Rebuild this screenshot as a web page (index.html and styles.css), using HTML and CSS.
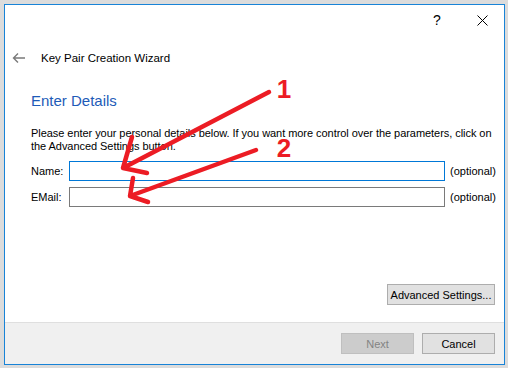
FILE: index.html
```html
<!DOCTYPE html>
<html lang="en">

<head>
    <meta charset="UTF-8">
    <title>Key Pair Creation Wizard</title>
    <link rel="stylesheet" href="styles.css">
</head>

<body>
    <div class="window">
        <div class="titlebar">
            <span class="tb-btn help">?</span>
            <span class="tb-btn close">
                <svg width="11" height="11" viewBox="0 0 11 11">
                    <path d="M0.5 0.5 L10.5 10.5 M10.5 0.5 L0.5 10.5" stroke="#000" stroke-width="1" fill="none" />
                </svg>
            </span>
        </div>
        <div class="header">
            <svg class="back" width="14" height="12" viewBox="0 0 14 12">
                <path d="M13 6 H1.5 M6 1.5 L1.5 6 L6 10.5" stroke="#7a7a7a" stroke-width="1.4" fill="none" />
            </svg>
            <span class="wizard-title">Key Pair Creation Wizard</span>
        </div>
        <div class="content">
            <h1>Enter Details</h1>
            <p>Please enter your personal details below. If you want more control over the parameters, click on
                the Advanced Settings button.</p>
            <div class="form">
                <label for="name">Name:</label>
                <input id="name" class="field focused" type="text">
                <span class="optional">(optional)</span>
                <label for="email">EMail:</label>
                <input id="email" class="field" type="text">
                <span class="optional">(optional)</span>
            </div>
            <div class="adv-row">
                <button class="btn adv">Advanced Settings...</button>
            </div>
        </div>
        <div class="footer">
            <button class="btn" disabled>Next</button>
            <button class="btn">Cancel</button>
        </div>
    </div>

    <!-- red marks drawn over the screenshot -->
    <svg class="marks" width="508" height="368" viewBox="0 0 508 368">
        <g stroke="#ec1c24" stroke-width="4.5" stroke-linecap="round" stroke-linejoin="round" fill="none">
            <path d="M269 92 L123 168 M132 137 L123 168 L147 173" />
            <path d="M256 150 L130 196 M133 178 L130 196 L148 202" />
        </g>
        <text x="284" y="98" class="num">1</text>
        <text x="284" y="157" class="num">2</text>
    </svg>
</body>

</html>
```

FILE: styles.css
```css
/* Reset */
body {
    margin: 0;
    padding: 0;
    width: 508px;
    height: 368px;
    overflow: hidden;
    position: relative;
    background-color: #dcdcdc;
    font-family: 'Liberation Sans', Arial, sans-serif;
    font-size: 11px;
    color: #000;
}

/* Dialog frame */
.window {
    margin: 4px 0 0 4px;
    width: 501px;
    height: 361px;
    box-sizing: border-box;
    border: 1px solid #1883d7;
    background-color: #fff;
    display: flex;
    flex-direction: column;
}

.titlebar {
    height: 30px;
    display: flex;
    justify-content: flex-end;
}

.tb-btn {
    display: flex;
    align-items: center;
    justify-content: center;
    height: 30px;
}

.help {
    width: 46px;
    font-size: 14px;
}

.close {
    width: 44px;
}

.header {
    height: 45px;
    display: flex;
    align-items: center;
    padding-left: 7px;
}

.back {
    margin-right: 15px;
}

.wizard-title {
    font-size: 11.5px;
}

.content {
    flex: 1;
    display: flex;
    flex-direction: column;
    padding: 0 9px 17px 26px;
}

.content h1 {
    margin: 11px 0 0 0;
    font-size: 15px;
    line-height: 20px;
    font-weight: normal;
    color: #1e5bb8;
}

.content p {
    margin: 16px -4px 0 0;
    line-height: 13px;
    letter-spacing: -0.05px;
}

/* Name / EMail rows */
.form {
    margin-top: 8px;
    display: grid;
    grid-template-columns: 38px 376px 1fr;
    row-gap: 6px;
    align-items: center;
}

.field {
    width: 376px;
    height: 20px;
    box-sizing: border-box;
    margin: 0;
    border: 1px solid #7a7a7a;
    background-color: #fff;
    outline: none;
}

.field.focused {
    border-color: #0078d7;
}

.optional {
    padding-left: 5px;
}

.adv-row {
    margin-top: auto;
    display: flex;
    justify-content: flex-end;
}

/* Buttons */
.btn {
    height: 21px;
    width: 73px;
    box-sizing: border-box;
    margin: 0;
    padding: 0;
    font-family: 'Liberation Sans', Arial, sans-serif;
    font-size: 11px;
    color: #000;
    background-color: #e1e1e1;
    border: 1px solid #adadad;
    border-radius: 0;
}

.btn.adv {
    width: 108px;
}

.btn:disabled {
    color: #838383;
    background-color: #cccccc;
    border-color: #bfbfbf;
}

.footer {
    height: 42px;
    box-sizing: border-box;
    border-top: 1px solid #dfdfdf;
    background-color: #f0f0f0;
    padding: 10px 9px 0 0;
    display: flex;
    justify-content: flex-end;
    gap: 8px;
}

.marks {
    position: absolute;
    top: 0;
    left: 0;
    pointer-events: none;
}

.num {
    font-family: 'Liberation Sans', Arial, sans-serif;
    font-weight: bold;
    font-size: 26px;
    fill: #ec1c24;
    text-anchor: middle;
}
```
